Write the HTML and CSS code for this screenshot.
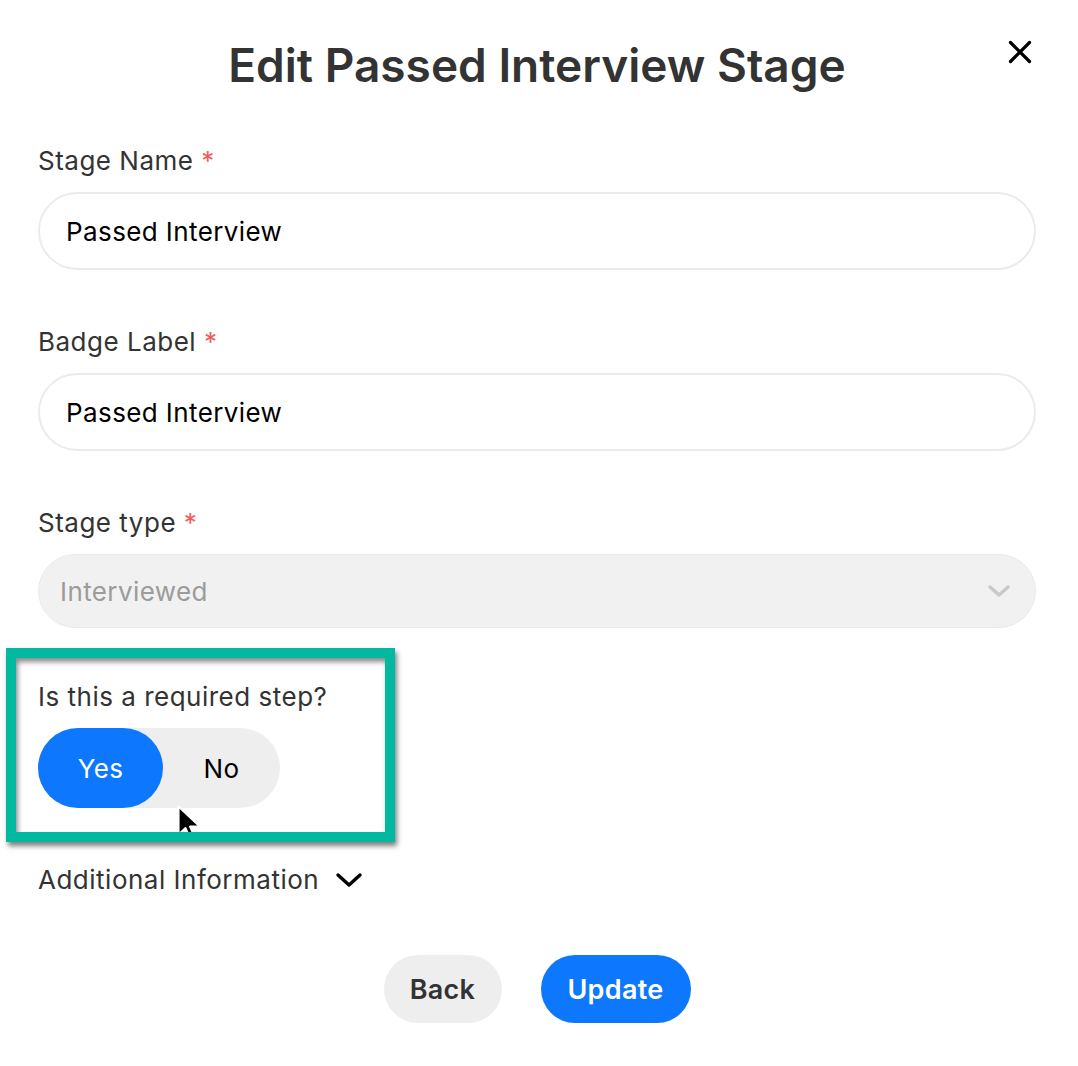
FILE: index.html
```html
<!DOCTYPE html>
<html>
<head>
<meta charset="utf-8">
<link rel="stylesheet" href="styles.css">
</head>
<body>
<div class="modal">
  <div class="header">
    <h1 class="title">Edit Passed Interview Stage</h1>
    <button class="close" aria-label="Close">
      <svg width="26" height="26" viewBox="0 0 26 26"><path d="M3.5 3.5 L22.5 22.5 M22.5 3.5 L3.5 22.5" stroke="#000" stroke-width="3.2" stroke-linecap="round"/></svg>
    </button>
  </div>

  <div class="field">
    <div class="label">Stage Name <span class="req">*</span></div>
    <div class="input">Passed Interview</div>
  </div>

  <div class="field">
    <div class="label">Badge Label <span class="req">*</span></div>
    <div class="input">Passed Interview</div>
  </div>

  <div class="field select-field">
    <div class="label">Stage type <span class="req">*</span></div>
    <div class="select">
      <span>Interviewed</span>
      <svg width="24" height="14" viewBox="0 0 24 14"><path d="M3 3 L12 11 L21 3" fill="none" stroke="#c9c9c9" stroke-width="3.4" stroke-linecap="round" stroke-linejoin="round"/></svg>
    </div>
  </div>

  <div class="field required">
    <div class="label">Is this a required step?</div>
    <div class="toggle">
      <div class="opt on">Yes</div>
      <div class="opt">No</div>
    </div>
    <svg class="cursor" width="28" height="40" viewBox="0 0 22 30"><path d="M2 2 L2 24 L7.5 19 L11.5 28 L15 26.5 L11 17.8 L18.5 17.5 Z" fill="#000" stroke="#fff" stroke-width="1.6" stroke-linejoin="round"/></svg>
    <div class="highlight"></div>
  </div>

  <div class="more">
    <span>Additional Information</span>
    <svg width="28" height="18" viewBox="0 0 28 18"><path d="M3 4 L14 14 L25 4" fill="none" stroke="#000" stroke-width="3.4" stroke-linecap="round" stroke-linejoin="round"/></svg>
  </div>

  <div class="actions">
    <button class="btn back">Back</button>
    <button class="btn primary">Update</button>
  </div>
</div>
</body>
</html>
```

FILE: styles.css
```css
* { box-sizing: border-box; }
html, body { margin: 0; background: #fff; }
body {
  font-family: Inter, "Noto Sans", "Liberation Sans", sans-serif;
  color: #333;
}
.modal {
  width: 1078px;
  padding: 37px 42px 0 38px;
}
.header {
  position: relative;
  display: flex;
  justify-content: center;
  margin-bottom: 53px;
}
.title {
  margin: 0;
  font-size: 46px;
  line-height: 56px;
  font-weight: 580;
  color: #333;
  letter-spacing: 0;
}
.close {
  position: absolute;
  right: 3px;
  top: 2px;
  border: 0;
  background: none;
  padding: 0;
  width: 26px;
  height: 26px;
}
.field { margin-bottom: 57px; position: relative; }
.field.select-field { margin-bottom: 54px; }
.label {
  font-size: 26px;
  line-height: 30px;
  letter-spacing: 0.5px;
  color: #333;
  margin-bottom: 16px;
}
.req { color: #f25c5c; }
.input {
  height: 78px;
  border: 2px solid #ebebeb;
  border-radius: 40px;
  padding: 0 26px;
  display: flex;
  align-items: center;
  font-size: 26px;
  letter-spacing: 0.4px;
  color: #000;
}
.select {
  height: 74px;
  border: 1px solid #ebebeb;
  background: #f1f1f1;
  border-radius: 38px;
  padding: 0 24px 0 21px;
  display: flex;
  align-items: center;
  justify-content: space-between;
  font-size: 26px;
  letter-spacing: 0.4px;
  color: #9b9b9b;
}
.field.required { margin-bottom: 57px; }
.toggle {
  display: flex;
  width: 242px;
  height: 80px;
  margin-top: 1px;
  background: #eeeeee;
  border-radius: 40px;
}
.opt {
  flex: 1;
  display: flex;
  align-items: center;
  justify-content: center;
  font-size: 26px;
  letter-spacing: 0.4px;
  color: #000;
  border-radius: 40px;
}
.opt.on {
  flex: 0 0 125px;
  background: #0d78fe;
  color: #fff;
}
.highlight {
  position: absolute;
  left: -32px;
  top: -34px;
  width: 389px;
  height: 194px;
  border: 10px solid #00b9a0;
  box-shadow: 2px 4px 5px rgba(0,0,0,0.5), inset 2px 4px 5px rgba(0,0,0,0.45);
  pointer-events: none;
}
.cursor {
  position: absolute;
  left: 138px;
  top: 121px;
}
.more {
  display: flex;
  align-items: center;
  gap: 16px;
  font-size: 26px;
  letter-spacing: 0.5px;
  line-height: 30px;
  color: #333;
  margin-bottom: 60px;
}
.actions {
  display: flex;
  justify-content: center;
  gap: 39px;
}
.btn {
  height: 68px;
  border: 0;
  border-radius: 34px;
  font-family: inherit;
  font-size: 27px;
  font-weight: 600;
  letter-spacing: 0.3px;
  padding: 0;
}
.btn.back { background: #eeeeee; color: #333; width: 118px; }
.btn.primary { background: #0d78fe; color: #fff; width: 150px; }
```
